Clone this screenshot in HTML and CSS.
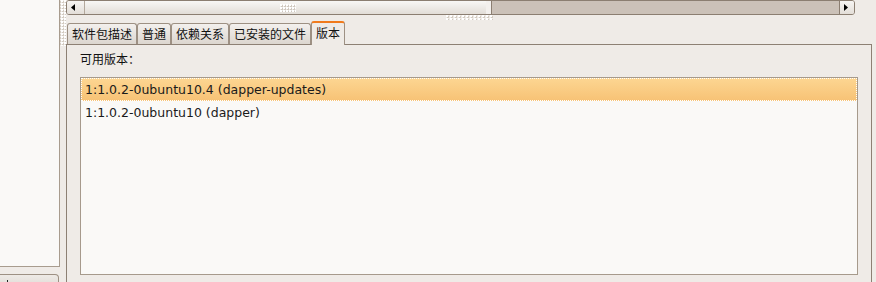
FILE: index.html
```html
<!DOCTYPE html>
<html lang="zh-CN">
<head>
  <meta charset="UTF-8" />
  <meta name="viewport" content="width=device-width, initial-scale=1.0" />
  <title>软件包属性</title>
  <link rel="stylesheet" href="styles.css">
</head>
<body>
  <div class="window">
    <div class="side">
      <div class="tree"></div>
      <div class="side-btn"><span class="mark"></span></div>
    </div>
    <div class="grip-v"></div>

    <div class="main">
      <div class="hscroll">
        <div class="arrow arrow-left">
          <svg width="5" height="7" viewBox="0 0 5 7"><path d="M4 0 L0 3.5 L4 7 Z" fill="#000"/></svg>
        </div>
        <div class="slider"><span class="dots"></span></div>
        <div class="trough"></div>
        <div class="arrow arrow-right">
          <svg width="5" height="7" viewBox="0 0 5 7"><path d="M0 0 L4 3.5 L0 7 Z" fill="#000"/></svg>
        </div>
      </div>

      <div class="grip-h"><span></span></div>

      <div class="notebook">
        <div class="tabs">
          <div class="tab">软件包描述</div>
          <div class="tab">普通</div>
          <div class="tab">依赖关系</div>
          <div class="tab">已安装的文件</div>
          <div class="tab active">版本</div>
        </div>
        <div class="page">
          <div class="caption">可用版本：</div>
          <div class="list">
            <div class="row selected">1:1.0.2-0ubuntu10.4 (dapper-updates)</div>
            <div class="row">1:1.0.2-0ubuntu10 (dapper)</div>
          </div>
        </div>
      </div>
    </div>
  </div>
</body>
</html>
```

FILE: styles.css
```css
body {
  margin: 0;
  background: #efebe7;
  font-family: "DejaVu Sans", "Noto Sans CJK SC", sans-serif;
  color: #1a1a1a;
  overflow: hidden;
}
.window {
  display: flex;
  width: 876px;
  height: 282px;
  overflow: hidden;
}

/* left pane */
.side {
  width: 60px;
  flex-shrink: 0;
}
.tree {
  width: 59px;
  height: 266px;
  background: #faf9f7;
  border-right: 1px solid #a89c8e;
  border-bottom: 1px solid #a89c8e;
}
.side-btn {
  margin-top: 7px;
  width: 58px;
  height: 12px;
  background: linear-gradient(#eeeae6, #e0dbd5);
  border: 1px solid #9d9083;
  border-left: none;
  border-radius: 0 4px 0 0;
}
.mark {
  display: block;
  width: 1px;
  height: 3px;
  margin: 5px 0 0 7px;
  background: #222;
}
.grip-v {
  width: 6px;
  height: 46px;
  flex-shrink: 0;
  background: radial-gradient(circle at 1px 1px, #ffffff 0.9px, transparent 1.1px) 1px 0 / 3px 3px,
              radial-gradient(circle at 2px 2px, #d2cac1 0.7px, transparent 1px) 1px 0 / 3px 3px;
}

/* right pane */
.main {
  flex: 1;
  display: flex;
  flex-direction: column;
}
.hscroll {
  display: flex;
  height: 13px;
  margin-right: 21px;
  border: 1px solid #8b7e71;
  border-radius: 3px;
  overflow: hidden;
}
.arrow {
  display: flex;
  align-items: center;
  background: linear-gradient(#f7f5f3, #e3ded8);
}
.arrow-left {
  width: 13px;
  padding-left: 4px;
  border-right: 1px solid #b3a89c;
}
.arrow-right {
  width: 10px;
  padding-left: 4px;
  border-left: 1px solid #8b7e71;
}
.slider {
  width: 406px;
  display: flex;
  align-items: center;
  justify-content: center;
  background: linear-gradient(#f8f7f5, #e2ddd7);
  border-right: 1px solid #8b7e71;
  box-shadow: inset -5px 0 0 #f3f0ed;
}
.dots {
  width: 16px;
  height: 8px;
  background: radial-gradient(circle at 1px 1px, #ffffff 0.9px, transparent 1.1px) 0 0 / 3px 3px,
              radial-gradient(circle at 2px 2px, #cfc7be 0.7px, transparent 1px) 0 0 / 3px 3px;
}
.trough {
  flex: 1;
  background: #cbc1b8;
}
.grip-h {
  height: 6px;
  display: flex;
  justify-content: center;
}
.grip-h span {
  width: 48px;
  height: 5px;
  margin-left: -3px;
  background: radial-gradient(circle at 1px 1px, #ffffff 0.9px, transparent 1.1px) 0 0 / 4px 3px,
              radial-gradient(circle at 2px 2px, #d2cac1 0.7px, transparent 1px) 0 0 / 4px 3px;
}

/* notebook */
.notebook {
  flex: 1;
  display: flex;
  flex-direction: column;
  margin-right: 4px;
}
.tabs {
  display: flex;
  align-items: flex-end;
  height: 23px;
  padding-left: 1px;
}
.tab {
  height: 20px;
  line-height: 22px;
  padding: 0 4px;
  font-size: 12px;
  color: #111;
  border: 1px solid #9d9083;
  border-bottom: none;
  border-radius: 3px 3px 0 0;
  background: linear-gradient(#f3f0ed, #dcd6cf);
}
.tab.active {
  position: relative;
  height: 22px;
  margin-bottom: -1px;
  line-height: 23px;
  border-top: 2px solid #f07a1c;
  background: #efebe7;
  z-index: 1;
}
.page {
  flex: 1;
  border: 1px solid #8d8074;
  border-bottom: none;
  padding: 7px 13px 0 13px;
}
.caption {
  font-size: 12px;
  color: #111;
  line-height: 16px;
  margin-bottom: 9px;
}
.list {
  height: 196px;
  background: #faf9f7;
  border: 1px solid #a69a8c;
}
.row {
  height: 23px;
  line-height: 23px;
  padding-left: 4px;
  font-size: 12.5px;
  white-space: nowrap;
}
.row.selected {
  background: linear-gradient(#fdd692, #f7c275);
  outline: 1px dotted #ffffff;
  outline-offset: -1px;
}
```
